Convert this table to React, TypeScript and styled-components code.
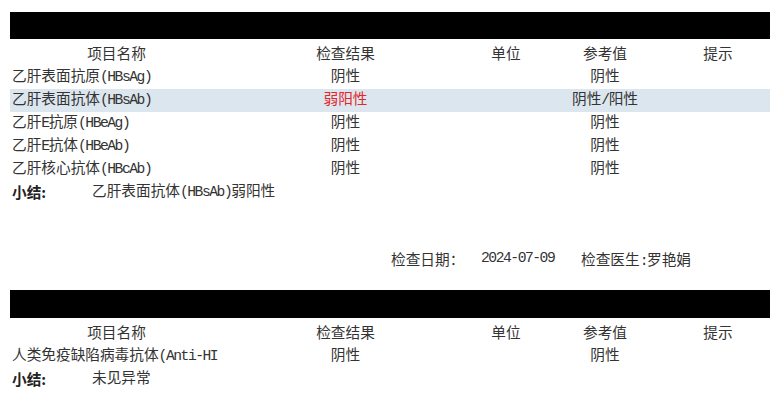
import React from "react";
import styled, { createGlobalStyle } from "styled-components";

const Global = createGlobalStyle`
  html, body { margin: 0; padding: 0; background: #fff; }
  body {
    font-family: "Noto Sans CJK SC", "Liberation Serif", serif;
    font-size: 14.67px;
    color: #333;
  }
`;

const Page = styled.div`
  width: 760px;
  padding: 12px 9px 0 10px;
`;

const Section = styled.section`
  display: flex;
  flex-direction: column;
`;

const Bar = styled.div<{ $h: number; $mt?: number }>`
  height: ${(p) => p.$h}px;
  margin-top: ${(p) => p.$mt ?? 0}px;
  background: #000;
`;

const Row = styled.div<{ $head?: boolean; $hl?: boolean }>`
  display: grid;
  grid-template-columns: 213px 245px 76px 122px 104px;
  height: ${(p) => (p.$head ? 27 : 23)}px;
  padding-top: ${(p) => (p.$head ? 5 : 0)}px;
  box-sizing: border-box;
  background: ${(p) => (p.$hl ? "#dce6ef" : "transparent")};
  line-height: 17px;
`;

const Cell = styled.div<{ $left?: boolean; $red?: boolean }>`
  text-align: ${(p) => (p.$left ? "left" : "center")};
  padding-left: ${(p) => (p.$left ? 2 : 0)}px;
  white-space: nowrap;
  color: ${(p) => (p.$red ? "#e5262b" : "#333")};
`;

const Summary = styled.div`
  display: grid;
  grid-template-columns: 82px 1fr;
  height: 23px;
  box-sizing: border-box;
  line-height: 17px;
`;

const SumLabel = styled.div`
  padding-left: 2px;
  padding-top: 2px;
  font-weight: 700;
  color: #222;
`;

const Footer = styled.div`
  display: grid;
  grid-template-columns: 90px 100px auto;
  padding-left: 381px;
  margin-top: 46px;
  line-height: 17px;
`;

const Latin = styled.span`
  font-family: "Liberation Mono", "DejaVu Sans Mono", monospace;
  font-size: 14.67px;
  letter-spacing: -1.47px;
`;

const Txt: React.FC<{ s: string }> = ({ s }) => {
  const parts = s.match(/[\x20-\x7e]+|[^\x20-\x7e]+/g) || [];
  return (
    <>
      {parts.map((p, i) =>
        /^[\x20-\x7e]+$/.test(p) ? <Latin key={i}>{p}</Latin> : <span key={i}>{p}</span>
      )}
    </>
  );
};

type Item = { name: string; result: string; ref: string; red?: boolean; hl?: boolean };

const Header = () => (
  <Row $head>
    <Cell>项目名称</Cell>
    <Cell>检查结果</Cell>
    <Cell>单位</Cell>
    <Cell>参考值</Cell>
    <Cell>提示</Cell>
  </Row>
);

const ItemRow: React.FC<{ it: Item }> = ({ it }) => (
  <Row $hl={it.hl}>
    <Cell $left>
      <Txt s={it.name} />
    </Cell>
    <Cell $red={it.red}>{it.result}</Cell>
    <Cell></Cell>
    <Cell>
      <Txt s={it.ref} />
    </Cell>
    <Cell></Cell>
  </Row>
);

const hbv: Item[] = [
  { name: "乙肝表面抗原(HBsAg)", result: "阴性", ref: "阴性" },
  { name: "乙肝表面抗体(HBsAb)", result: "弱阳性", ref: "阴性/阳性", red: true, hl: true },
  { name: "乙肝E抗原(HBeAg)", result: "阴性", ref: "阴性" },
  { name: "乙肝E抗体(HBeAb)", result: "阴性", ref: "阴性" },
  { name: "乙肝核心抗体(HBcAb)", result: "阴性", ref: "阴性" },
];

const hiv: Item[] = [{ name: "人类免疫缺陷病毒抗体(Anti-HI", result: "阴性", ref: "阴性" }];

export default function App() {
  return (
    <Page>
      <Global />
      <Section>
        <Bar $h={27} />
        <Header />
        {hbv.map((it, i) => (
          <ItemRow key={i} it={it} />
        ))}
        <Summary>
          <SumLabel>小结:</SumLabel>
          <div>
            <Txt s="乙肝表面抗体(HBsAb)弱阳性" />
          </div>
        </Summary>
        <Footer>
          <span>检查日期：</span>
          <Txt s="2024-07-09" />
          <span>
            <Txt s="检查医生:罗艳娟" />
          </span>
        </Footer>
      </Section>
      <Section>
        <Bar $h={28} $mt={20} />
        <Header />
        {hiv.map((it, i) => (
          <ItemRow key={i} it={it} />
        ))}
        <Summary>
          <SumLabel>小结:</SumLabel>
          <div>未见异常</div>
        </Summary>
      </Section>
    </Page>
  );
}
